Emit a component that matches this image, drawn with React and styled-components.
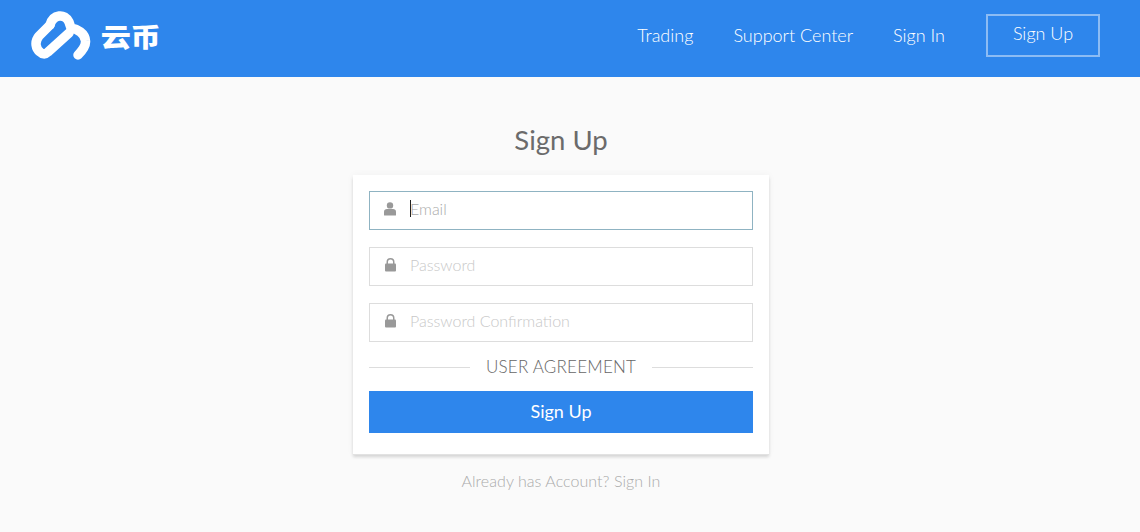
import React from 'react'
import styled, { createGlobalStyle } from 'styled-components'

const GlobalStyle = createGlobalStyle`
  html, body {
    margin: 0;
    padding: 0;
    background: #fafafa;
    font-family: Lato, "Noto Sans CJK SC", sans-serif;
  }
`

const Page = styled.div`
  width: 1140px;
  height: 532px;
  overflow: hidden;
`

const Header = styled.header`
  height: 77px;
  box-sizing: border-box;
  background: #2e86ec;
  display: flex;
  align-items: center;
  justify-content: space-between;
  padding: 0 40px 6px 31px;
`

const Brand = styled.div`
  display: flex;
  align-items: center;
  gap: 11px;
`

const BrandName = styled.span`
  display: inline-block;
  font-family: "Noto Sans CJK SC", sans-serif;
  font-weight: 900;
  font-size: 29px;
  line-height: 1;
  letter-spacing: -0.5px;
  color: #fff;
  transform: scale(1.04, 0.9);
`

const Nav = styled.nav`
  display: flex;
  align-items: center;
  gap: 40px;
`

const NavLink = styled.a`
  padding-bottom: 2px;
  font-size: 18px;
  font-weight: 300;
  color: #fff;
`

const NavButton = styled.a`
  width: 114px;
  height: 43px;
  margin-left: 1px;
  box-sizing: border-box;
  border: 2px solid rgba(255, 255, 255, 0.45);
  display: flex;
  align-items: center;
  justify-content: center;
  padding-bottom: 5px;
  font-size: 18px;
  font-weight: 300;
  color: #fff;
`

const Main = styled.main`
  display: flex;
  flex-direction: column;
  align-items: center;
  padding: 46px 18px 0 0;
`

const Title = styled.h1`
  margin: 0 0 19px;
  font-size: 27.5px;
  line-height: 33px;
  font-weight: 400;
  color: #6b6b6b;
`

const Card = styled.form`
  width: 416px;
  height: 279px;
  box-sizing: border-box;
  background: #fff;
  padding: 16px;
  display: flex;
  flex-direction: column;
  gap: 17px;
  box-shadow: 0 1px 0 #e2e2e2, 0 3px 3px rgba(0, 0, 0, 0.14), 0 0 8px rgba(0, 0, 0, 0.04);
`

const Field = styled.label`
  height: 39px;
  box-sizing: border-box;
  display: flex;
  align-items: center;
  padding: 0 0 4px 14px;
  gap: 14px;
  border: 1px solid ${p => (p.$active ? '#8fb3c2' : '#ddd')};
  color: #999;
`

const IconSlot = styled.span`
  width: 12px;
  height: 14px;
  display: flex;
  justify-content: center;
`

const InputWrap = styled.span`
  flex: 1;
  min-width: 0;
  display: flex;
  align-items: center;
`

const Input = styled.input`
  flex: 1;
  min-width: 0;
  border: 0;
  outline: 0;
  padding: 0;
  background: transparent;
  font-family: Lato, sans-serif;
  font-size: 16px;
  font-weight: 300;
  color: #333;

  &::placeholder {
    color: ${p => (p.$active ? '#aaa' : '#c8c8c8')};
    opacity: 1;
  }
`

const Caret = styled.span`
  width: 1px;
  height: 17px;
  margin-right: -1px;
  background: #222;
`

const Agreement = styled.div`
  display: flex;
  align-items: center;
  gap: 16px;
  height: 16px;
  margin-bottom: -1px;
  font-size: 17px;
  letter-spacing: 0.22px;
  font-weight: 300;
  color: #666;
  white-space: nowrap;

  &::before,
  &::after {
    content: '';
    flex: 1;
    height: 1px;
    background: #ddd;
  }

  span {
    position: relative;
    top: -1px;
  }
`

const Submit = styled.button`
  height: 42px;
  border: 0;
  padding: 0 0 2px;
  background: #2e86ec;
  color: #fff;
  font-family: Lato, sans-serif;
  font-size: 18px;
  font-weight: 400;
`

const Footer = styled.p`
  margin: 18px 0 0;
  font-size: 16px;
  line-height: 18px;
  font-weight: 300;
  letter-spacing: 0.05px;
  color: #aaa;
`

const Logo = () => (
  <svg width="60" height="50" viewBox="0 0 60 50" fill="none" stroke="#fff" strokeWidth="9.5" strokeLinecap="round" strokeLinejoin="round">
    <path d="M19 14 L8 25 C3 31 5 38 9 41 C11 43 14 44 17 41 L38 22" />
    <path d="M19 14 C22 3 34 2 38 11 L40 17 C46 18 54 22 54.5 30 C55 35 52 39 47 44" />
  </svg>
)

const UserIcon = () => (
  <svg width="12" height="14" viewBox="0 0 12 14" fill="currentColor">
    <circle cx="6" cy="3.4" r="3.2" />
    <path d="M0 13V9.6C0 8 1.3 7 3 7h6c1.7 0 3 1 3 2.6V13c0 .4-.3.6-.6.6H.6C.3 13.6 0 13.4 0 13z" />
  </svg>
)

const LockIcon = () => (
  <svg width="11" height="14" viewBox="0 0 11 14" fill="currentColor">
    <path d="M1.5 6V4a4 4 0 0 1 8 0v2H8V4a2.5 2.5 0 0 0-5 0v2z" />
    <rect x="0" y="5.6" width="11" height="8" rx="1" />
  </svg>
)

export default function App() {
  return (
    <Page>
      <GlobalStyle />
      <Header>
        <Brand>
          <Logo />
          <BrandName>云币</BrandName>
        </Brand>
        <Nav>
          <NavLink>Trading</NavLink>
          <NavLink>Support Center</NavLink>
          <NavLink>Sign In</NavLink>
          <NavButton>Sign Up</NavButton>
        </Nav>
      </Header>
      <Main>
        <Title>Sign Up</Title>
        <Card>
          <Field $active>
            <IconSlot><UserIcon /></IconSlot>
            <InputWrap>
              <Caret />
              <Input $active placeholder="Email" />
            </InputWrap>
          </Field>
          <Field>
            <IconSlot><LockIcon /></IconSlot>
            <InputWrap>
              <Input placeholder="Password" />
            </InputWrap>
          </Field>
          <Field>
            <IconSlot><LockIcon /></IconSlot>
            <InputWrap>
              <Input placeholder="Password Confirmation" />
            </InputWrap>
          </Field>
          <Agreement><span>USER AGREEMENT</span></Agreement>
          <Submit type="button">Sign Up</Submit>
        </Card>
        <Footer>Already has Account? Sign In</Footer>
      </Main>
    </Page>
  )
}
